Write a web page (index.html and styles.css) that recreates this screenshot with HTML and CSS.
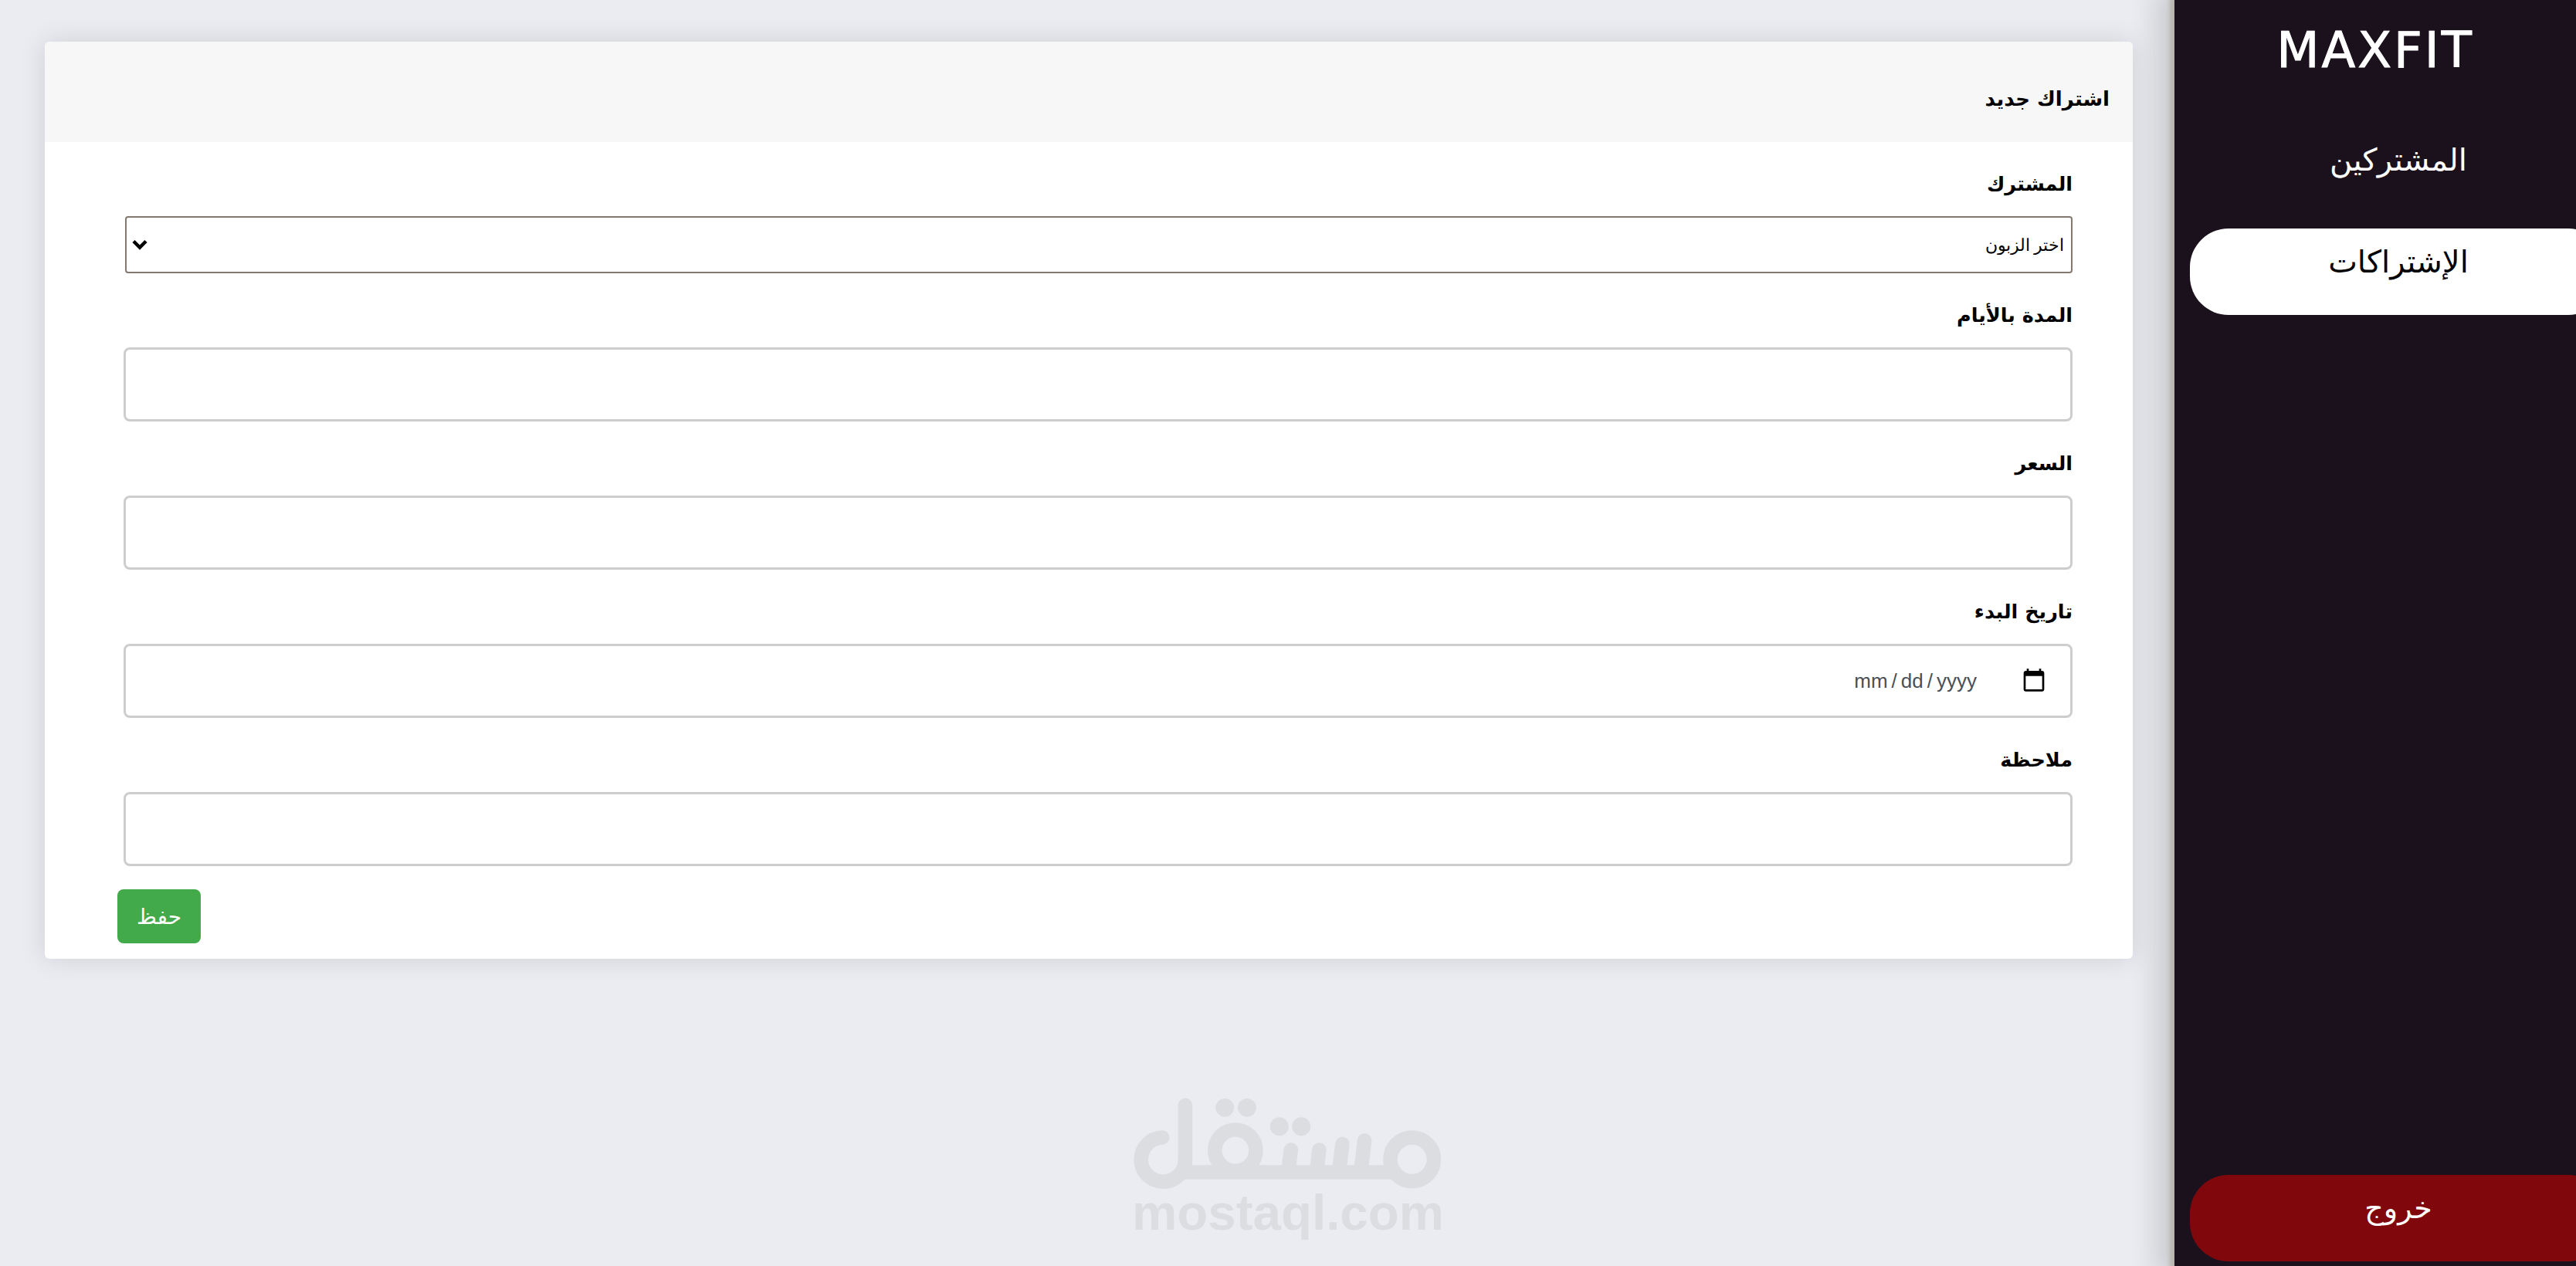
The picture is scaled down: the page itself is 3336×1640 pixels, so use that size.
FILE: index.html
```html
<!DOCTYPE html>
<html lang="ar" dir="rtl">
<head>
    <meta charset="UTF-8">
    <title>MAXFIT - اشتراك جديد</title>
    <link rel="stylesheet" href="styles.css">
</head>
<body>
    <aside class="sidebar">
        <div class="brand" dir="ltr">MAXFIT</div>
        <nav class="menu">
            <a href="#" class="menu-item">المشتركين</a>
            <a href="#" class="menu-item active">الإشتراكات</a>
        </nav>
        <a href="#" class="menu-item logout">خروج</a>
    </aside>

    <main class="main">
        <section class="card">
            <div class="card-header">اشتراك جديد</div>
            <form class="card-body">
                <div class="field select-field">
                    <label>المشترك</label>
                    <select class="picker">
                        <option>اختر الزبون</option>
                    </select>
                </div>
                <div class="field">
                    <label>المدة بالأيام</label>
                    <input type="text" class="text-input">
                </div>
                <div class="field">
                    <label>السعر</label>
                    <input type="text" class="text-input">
                </div>
                <div class="field">
                    <label>تاريخ البدء</label>
                    <input type="date" class="text-input date-input">
                </div>
                <div class="field">
                    <label>ملاحظة</label>
                    <input type="text" class="text-input">
                </div>
                <button type="button" class="save">حفظ</button>
            </form>
        </section>
    </main>

    <div class="watermark" dir="ltr">
        <svg class="watermark-logo" viewBox="200 120 1210 365" width="403" height="122" fill="none" stroke="#dcdde1" stroke-width="56" stroke-linecap="round">
            <path d="M318 280 A86 86 0 1 0 407 365 V155"/>
            <path d="M400 415 H1210" stroke-linecap="butt"/>
            <circle cx="602" cy="330" r="80"/>
            <path d="M818 328 L808 410 M928 328 L918 410 M1018 306 L1005 410 M1104 292 L1090 410"/>
            <circle cx="1289" cy="365" r="85"/>
            <g fill="#dcdde1" stroke="none">
                <circle cx="561" cy="164" r="36"/>
                <circle cx="647" cy="164" r="36"/>
                <circle cx="773" cy="237" r="36"/>
                <circle cx="858" cy="237" r="36"/>
            </g>
        </svg>
        <div class="watermark-text">mostaql.com</div>
    </div>
</body>
</html>
```

FILE: styles.css
```css
* {
    box-sizing: border-box;
}

html, body {
    height: 100%;
}

body {
    margin: 0;
    display: flex;
    overflow: hidden;
    background-color: #ebecf1;
    color: #000;
    font-family: "DejaVu Sans", sans-serif;
}

.sidebar {
    width: 520px;
    height: 100%;
    flex: none;
    display: flex;
    flex-direction: column;
    overflow: hidden;
    padding-top: 30px;
    background-color: #1b111c;
    box-shadow: -3px 0 5px 3px #b8b4ac, -10px 0 34px 14px rgba(0, 0, 0, .14);
}

.brand {
    color: #fff;
    font-family: "Comic Sans MS", "DejaVu Sans", cursive;
    font-size: 64px;
    line-height: 70px;
    text-align: center;
    letter-spacing: 3px;
    -webkit-text-stroke: 1px #fff;
}

.menu {
    display: flex;
    flex-direction: column;
    gap: 20px;
    margin-top: 64px;
    flex: 1;
}

.menu-item {
    display: block;
    width: 540px;
    height: 112px;
    margin-right: -40px;
    flex: none;
    padding-top: 18px;
    border-radius: 50px;
    color: #fff;
    font-size: 40px;
    line-height: 50px;
    text-align: center;
    text-decoration: none;
}

.menu-item.active {
    background-color: #fff;
    color: #000;
}

.logout {
    margin-bottom: 6px;
    background-color: #80080c;
    font-size: 38px;
}

.main {
    flex: 1;
    padding: 54px 54px 0 58px;
}

.card {
    border-radius: 6px;
    background-color: #fff;
    box-shadow: 0 0 34px rgba(0, 0, 0, .12);
    overflow: hidden;
}

.card-header {
    height: 130px;
    padding: 54px 30px 0;
    background-color: #f7f7f7;
    font-size: 26px;
    font-weight: bold;
    line-height: 40px;
}

.card-body {
    padding: 34px 78px 20px 102px;
}

.field {
    margin-bottom: 16px;
    height: 176px;
}

.select-field {
    height: 154px;
}

.field label {
    display: block;
    font-size: 25.5px;
    font-weight: bold;
    line-height: 40px;
    margin-bottom: 22px;
}

.picker {
    display: block;
    width: 2522px;
    height: 74px;
    padding: 0 9px 0 40px;
    border: 2px solid #84796f;
    border-radius: 4px;
    appearance: none;
    background: #fff url("data:image/svg+xml,%3Csvg xmlns='http://www.w3.org/2000/svg' width='20' height='14' viewBox='0 0 20 14'%3E%3Cpath d='M2 2.5l8 8 8-8' fill='none' stroke='%23000' stroke-width='4.5'/%3E%3C/svg%3E") no-repeat left 7px center;
    font-family: "Liberation Serif", serif;
    font-size: 22px;
}

.text-input {
    display: block;
    width: 100%;
    height: 96px;
    padding: 0 24px;
    border: 3px solid #cdcdcd;
    border-radius: 8px;
    background-color: #fff;
    font-size: 26px;
}

.date-input {
    padding-right: 30px;
    font-family: "Liberation Sans", sans-serif;
    font-size: 26px;
    color: #495057;
    text-align: right;
}

.date-input::-webkit-datetime-edit-text {
    padding: 0 4px;
}

.date-input::-webkit-calendar-picker-indicator {
    width: 34px;
    height: 34px;
    margin-left: 56px;
    padding: 0;
}

.save {
    display: block;
    width: 108px;
    height: 70px;
    margin-top: -4px;
    margin-right: auto;
    margin-left: -8px;
    border: 0;
    border-radius: 8px;
    background-color: #43aa4b;
    color: #fff;
    font-family: "DejaVu Sans", sans-serif;
    font-size: 28px;
}

.watermark {
    position: absolute;
    left: 1466px;
    top: 1420px;
    pointer-events: none;
}

.watermark-logo {
    display: block;
}

.watermark-text {
    margin-top: -2px;
    color: #dcdde1;
    font-family: "Liberation Sans", sans-serif;
    font-size: 65.5px;
    font-weight: bold;
    line-height: 62px;
}
```
